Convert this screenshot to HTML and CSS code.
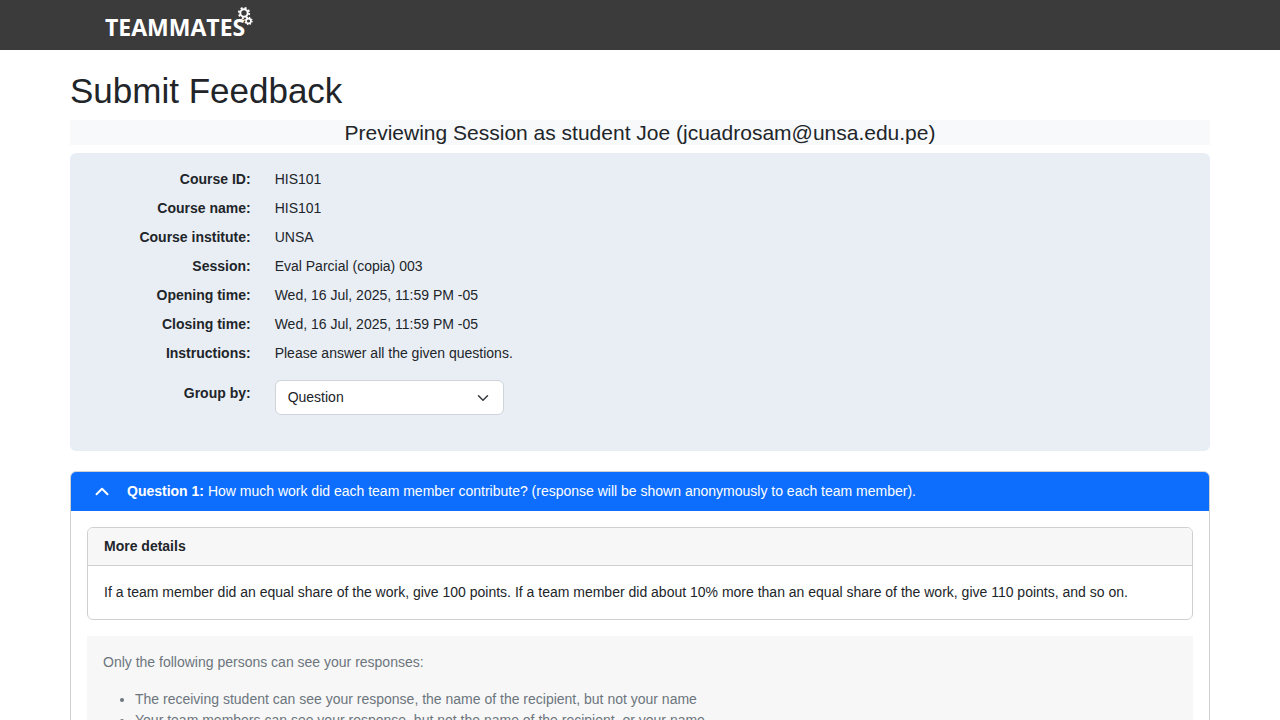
FILE: index.html
```html
<!DOCTYPE html>
<html lang="en">
<head>
<meta charset="utf-8">
<meta name="viewport" content="width=device-width, initial-scale=1">
<title>Submit Feedback - TEAMMATES</title>
<link rel="stylesheet" href="styles.css">
</head>
<body>
<header class="navbar">
  <div class="container navbar-inner">
    <a class="brand" href="#">TEAMMATES<svg class="brand-gears" viewBox="0 0 16 20" width="16" height="20" aria-hidden="true">
      <g fill="none" stroke="#fff">
        <circle cx="7" cy="7" r="3.7" stroke-width="2"/>
        <circle cx="7" cy="7" r="5.2" stroke-width="1.8" stroke-dasharray="2.04 2.04"/>
        <circle cx="11.5" cy="15" r="2.4" stroke-width="1.6"/>
        <circle cx="11.5" cy="15" r="3.5" stroke-width="1.4" stroke-dasharray="1.37 1.38"/>
      </g>
    </svg></a>
  </div>
</header>
<main class="container">
  <h1 class="page-title">Submit Feedback</h1>
  <h2 class="preview-banner">Previewing Session as student Joe (jcuadrosam@unsa.edu.pe)</h2>
  <section class="session-info">
    <dl class="info-list">
      <div class="info-row"><dt>Course ID:</dt><dd>HIS101</dd></div>
      <div class="info-row"><dt>Course name:</dt><dd>HIS101</dd></div>
      <div class="info-row"><dt>Course institute:</dt><dd>UNSA</dd></div>
      <div class="info-row"><dt>Session:</dt><dd>Eval Parcial (copia) 003</dd></div>
      <div class="info-row"><dt>Opening time:</dt><dd>Wed, 16 Jul, 2025, 11:59 PM -05</dd></div>
      <div class="info-row"><dt>Closing time:</dt><dd>Wed, 16 Jul, 2025, 11:59 PM -05</dd></div>
      <div class="info-row"><dt>Instructions:</dt><dd>Please answer all the given questions.</dd></div>
    </dl>
    <div class="group-row">
      <label class="group-label" for="group-by">Group by:</label>
      <div class="group-field">
        <div class="select-wrap">
          <select class="select" id="group-by"><option>Question</option></select>
          <svg class="select-arrow" viewBox="0 0 16 16" width="16" height="12" aria-hidden="true"><path d="m2 5 6 6 6-6" fill="none" stroke="#343a40" stroke-linecap="round" stroke-linejoin="round" stroke-width="2"/></svg>
        </div>
      </div>
    </div>
  </section>
  <section class="question">
    <div class="question-header">
      <button class="toggle" type="button" aria-label="Collapse question" aria-expanded="true">
        <svg viewBox="0 0 14 10" width="14" height="10" aria-hidden="true"><path d="M1.5 7.2 7 1.7 12.5 7.2" fill="none" stroke="#fff" stroke-width="2" stroke-linecap="round" stroke-linejoin="round"/></svg>
      </button>
      <div><strong>Question 1:</strong> How much work did each team member contribute? (response will be shown anonymously to each team member).</div>
    </div>
    <div class="question-body">
      <div class="details">
        <div class="details-header">More details</div>
        <div class="details-body">If a team member did an equal share of the work, give 100 points. If a team member did about 10% more than an equal share of the work, give 110 points, and so on.</div>
      </div>
      <div class="visibility">
        <p>Only the following persons can see your responses:</p>
        <ul>
          <li>The receiving student can see your response, the name of the recipient, but not your name</li>
          <li>Your team members can see your response, but not the name of the recipient, or your name</li>
        </ul>
      </div>
    </div>
  </section>
</main>
</body>
</html>
```
FILE: styles.css
```css
* { box-sizing: border-box; }

body {
  margin: 0;
  font-family: "Liberation Sans", Arial, sans-serif;
  font-size: 14px;
  line-height: 21px;
  color: #212529;
  background: #fff;
}

.container {
  max-width: 1164px;
  margin: 0 auto;
  padding: 0 12px;
}

.navbar { background: #3b3b3b; }
.navbar-inner {
  display: flex;
  align-items: center;
  min-height: 50px;
}
.brand {
  position: relative;
  margin-left: 35px;
  padding-top: 4px;
  font-family: "Open Sans", "Noto Sans", sans-serif;
  font-size: 23px;
  font-weight: 700;
  line-height: 30px;
  color: #fff;
  text-decoration: none;
}
.brand-gears {
  position: absolute;
  top: -2px;
  right: -8px;
}

.page-title {
  margin: 20px 0 8px;
  font-size: 35px;
  font-weight: 400;
  line-height: 42px;
}
.preview-banner {
  margin: 0 0 8px;
  font-size: 21px;
  font-weight: 400;
  line-height: 25px;
  text-align: center;
  background: #f8f9fa;
}

.session-info {
  margin-bottom: 20px;
  padding: 16px 4px 36px;
  border-radius: 6px;
  background: #e9eef5;
}
.info-list {
  display: grid;
  gap: 8px;
  margin: 0 0 16px;
}
.info-row, .group-row { display: flex; }
.info-row dt, .group-label {
  flex: 0 0 16.6667%;
  padding: 0 12px;
  font-weight: 700;
  text-align: right;
}
.info-row dd, .group-field {
  flex: 1;
  margin: 0;
  padding: 0 12px;
}
.group-label { padding-top: 3px; }
.select-wrap {
  position: relative;
  width: 25%;
  min-width: 120px;
}
.select {
  display: block;
  width: 100%;
  padding: 6px 36px 6px 12px;
  border: 1px solid #ced4da;
  border-radius: 6px;
  font: inherit;
  line-height: 21px;
  color: #212529;
  background: #fff;
  appearance: none;
}
.select-arrow {
  position: absolute;
  top: 12px;
  right: 13px;
  pointer-events: none;
}

.question {
  border: 1px solid #d0d0d0;
  border-radius: 6px;
  overflow: hidden;
}
.question-header {
  display: flex;
  align-items: center;
  padding: 9px 16px;
  color: #fff;
  background: #0d6efd;
}
.toggle {
  display: flex;
  margin-right: 10px;
  padding: 0 8px;
  border: 0;
  background: none;
}
.question-body { padding: 16px; }

.details {
  margin-bottom: 16px;
  border: 1px solid #d0d0d0;
  border-radius: 6px;
  overflow: hidden;
}
.details-header {
  padding: 8px 16px;
  border-bottom: 1px solid #d0d0d0;
  font-weight: 700;
  background: #f7f7f7;
}
.details-body { padding: 16px; }

.visibility {
  padding: 16px;
  color: #6c757d;
  background: #f7f7f7;
}
.visibility p { margin: 0 0 16px; }
.visibility ul {
  margin: 0;
  padding-left: 32px;
}
```
